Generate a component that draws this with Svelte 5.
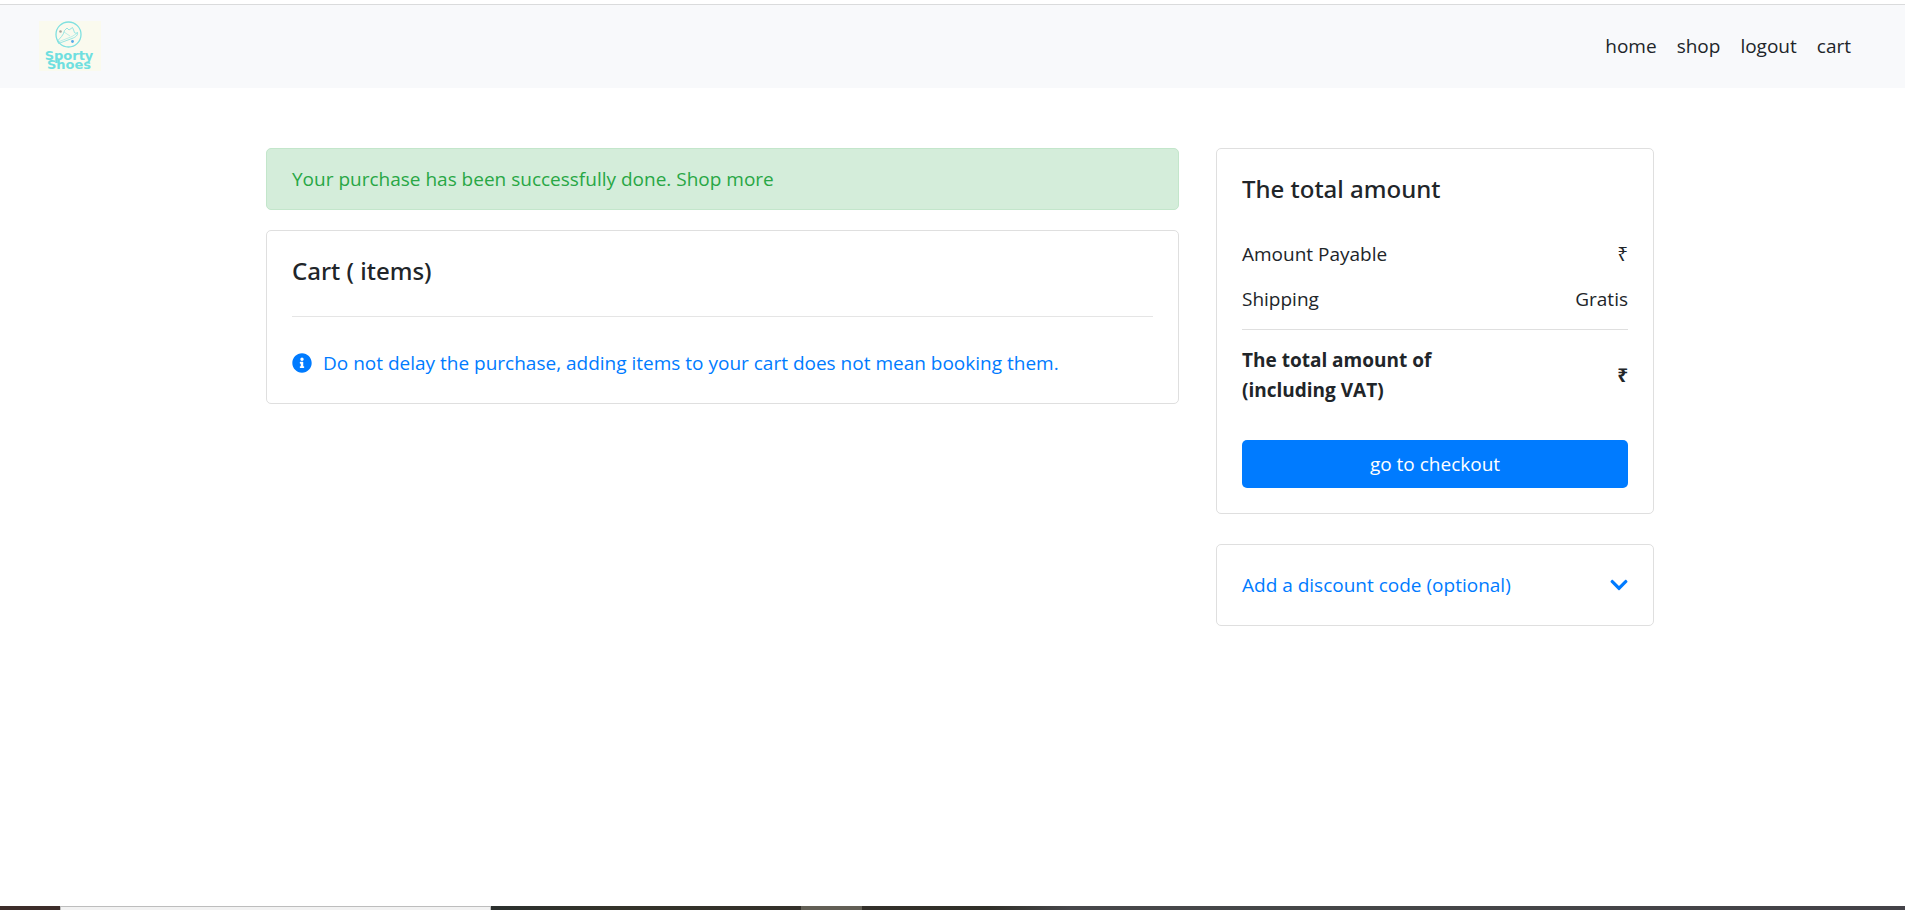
<script>
  const links = ['home', 'shop', 'logout', 'cart'];
  const charges = [
    { label: 'Amount Payable', value: '₹' },
    { label: 'Shipping', value: 'Gratis' }
  ];
</script>

<div class="page">
  <header class="navbar">
    <a class="brand" href="#home" aria-label="Sporty Shoes">
      <svg width="62" height="50" viewBox="0 0 62 50" fill="none" stroke="#7fe0e0">
        <rect width="62" height="50" fill="#fafaee" stroke="none" />
        <circle cx="29.500" cy="13.500" r="12.500" stroke-width="1.300" />
        <path d="M18.500 20C21 17 24.500 14.500 25.500 9.500L28 7L30 9L33.500 6.500L35 10C35 12.500 37 12.500 38.500 11.500C39 14 37 16 33 17.500L19.500 22.500Z" stroke-width="0.800" />
        <path d="M19 21L33 15.500L38.500 12M25 11L31 15" stroke-width="0.500" />
        <circle cx="21.500" cy="10.500" r="1.300" fill="#a9a49a" stroke="none" />
        <circle cx="33.500" cy="20.500" r="1.400" fill="#55a8ea" stroke="none" />
        <g class="wordmark" fill="#6fdfe0" stroke="none">
          <text x="30" y="39" text-anchor="middle">Sporty</text>
          <text x="30" y="48" text-anchor="middle">Shoes</text>
        </g>
      </svg>
    </a>
    <nav>
      {#each links as link}
        <a href="#{link}">{link}</a>
      {/each}
    </nav>
  </header>

  <main>
    <div class="layout">
      <div class="cart-column">
        <div class="alert" role="status">Your purchase has been successfully done. <a href="#shop">Shop more</a></div>
        <section class="card">
          <h1>Cart ( items)</h1>
          <hr />
          <p class="notice">
            <svg width="20" height="20" viewBox="0 0 512 512" fill="currentColor" aria-hidden="true">
              <path d="M256 8C119 8 8 119 8 256s111 248 248 248 248-111 248-248S393 8 256 8zm0 110c23.200 0 42 18.800 42 42s-18.800 42-42 42-42-18.800-42-42 18.800-42 42-42zm56 254c0 6.600-5.400 12-12 12h-88c-6.600 0-12-5.400-12-12v-24c0-6.600 5.400-12 12-12h12v-64h-12c-6.600 0-12-5.400-12-12v-24c0-6.600 5.400-12 12-12h64c6.600 0 12 5.400 12 12v100h12c6.600 0 12 5.400 12 12v24z" />
            </svg>
            Do not delay the purchase, adding items to your cart does not mean booking them.
          </p>
        </section>
      </div>

      <aside>
        <section class="card">
          <h2>The total amount</h2>
          <dl>
            {#each charges as charge}
              <div class="row">
                <dt>{charge.label}</dt>
                <dd>{charge.value}</dd>
              </div>
            {/each}
            <div class="row total">
              <dt>The total amount of<br />(including VAT)</dt>
              <dd>₹</dd>
            </div>
          </dl>
          <button class="checkout" type="button">go to checkout</button>
        </section>
        <section class="card">
          <button class="discount" type="button" aria-expanded="false">
            Add a discount code (optional)
            <svg width="18" height="20" viewBox="0 0 448 512" fill="currentColor" aria-hidden="true">
              <path d="M207 381.500L12.700 187.100c-9.400-9.400-9.400-24.600 0-33.900l22.700-22.700c9.400-9.400 24.500-9.400 33.900 0L224 284.500l154.700-154c9.400-9.300 24.500-9.300 33.900 0l22.700 22.700c9.400 9.400 9.400 24.600 0 33.900L241 381.500c-9.400 9.400-24.600 9.400-34 0z" />
            </svg>
          </button>
        </section>
      </aside>
    </div>
  </main>

  <footer class="taskbar" aria-hidden="true">
    <span class="start"></span>
    <span class="search"></span>
    <span class="apps"></span>
    <span class="active"></span>
    <span class="tray"></span>
  </footer>
</div>

<style>
  :global(body) {
    margin: 0;
  }
  .page {
    min-height: 100vh;
    display: flex;
    flex-direction: column;
    box-sizing: border-box;
    padding-top: 4px;
    background: #fff;
    color: #212529;
    font: 400 19px/30px 'Open Sans', 'Noto Sans', sans-serif;
  }
  a {
    color: inherit;
    text-decoration: none;
  }
  .navbar {
    display: flex;
    align-items: center;
    justify-content: space-between;
    padding: 16px 54px 17px 39px;
    border-top: 1px solid #dadbdc;
    background: #f8f9fb;
  }
  .brand,
  .brand svg {
    display: block;
  }
  .wordmark {
    font: 700 13px 'DejaVu Sans', sans-serif;
  }
  nav {
    display: flex;
    gap: 20px;
  }
  main {
    flex: 1;
    padding: 60px 0 40px 15px;
  }
  .layout {
    display: grid;
    grid-template-columns: minmax(0, 913fr) minmax(0, 438fr);
    gap: 37px;
    max-width: 1388px;
    margin: 0 auto;
  }
  .cart-column {
    display: flex;
    flex-direction: column;
    gap: 20px;
  }
  aside {
    display: flex;
    flex-direction: column;
    gap: 30px;
  }
  .alert {
    padding: 15px 25px;
    border: 1px solid #c3e6cb;
    border-radius: 5px;
    background: #d4edda;
    color: #28a745;
  }
  .card {
    padding: 25px;
    border: 1px solid #dfdfdf;
    border-radius: 5px;
  }
  h1,
  h2 {
    margin: 0;
    font-family: 'Noto Sans', 'Open Sans', sans-serif;
    font-size: 24px;
    line-height: 30px;
    font-weight: 500;
  }
  hr {
    margin: 30px 0 31px;
    border: 0;
    border-top: 1px solid #e5e5e5;
  }
  .notice {
    display: flex;
    align-items: center;
    gap: 11px;
    margin: 0;
    color: #007bff;
  }
  .notice svg {
    flex: none;
  }
  dl {
    margin: 35px 0;
  }
  .row {
    display: flex;
    align-items: center;
    justify-content: space-between;
    padding-bottom: 15px;
  }
  dd {
    margin: 0;
  }
  .total {
    padding: 15px 0 0;
    border-top: 1px solid #dfdfdf;
    font-weight: 700;
  }
  button {
    display: block;
    width: 100%;
    border: 0;
    font: inherit;
    cursor: pointer;
  }
  .checkout {
    padding: 9px 16px;
    border-radius: 5px;
    background: #007bff;
    color: #fff;
  }
  .discount {
    display: flex;
    align-items: center;
    justify-content: space-between;
    padding: 0;
    background: none;
    color: #007bff;
    text-align: left;
  }
  .taskbar {
    display: flex;
    height: 4px;
  }
  .start {
    flex: 60;
    background: #3d2d2a;
  }
  .search {
    flex: 430;
    box-sizing: border-box;
    border: 1px solid #bdbdbd;
    border-bottom: 0;
    background: #f2f2f2;
  }
  .apps {
    flex: 310;
    background: linear-gradient(90deg, #2b302e, #34332a 40%, #33302a);
  }
  .active {
    flex: 61;
    background: #625f55;
  }
  .tray {
    flex: 1044;
    background: linear-gradient(90deg, #33302a, #302f28 12%, #47474a 20%, #454748 40%, #444248);
  }
</style>
